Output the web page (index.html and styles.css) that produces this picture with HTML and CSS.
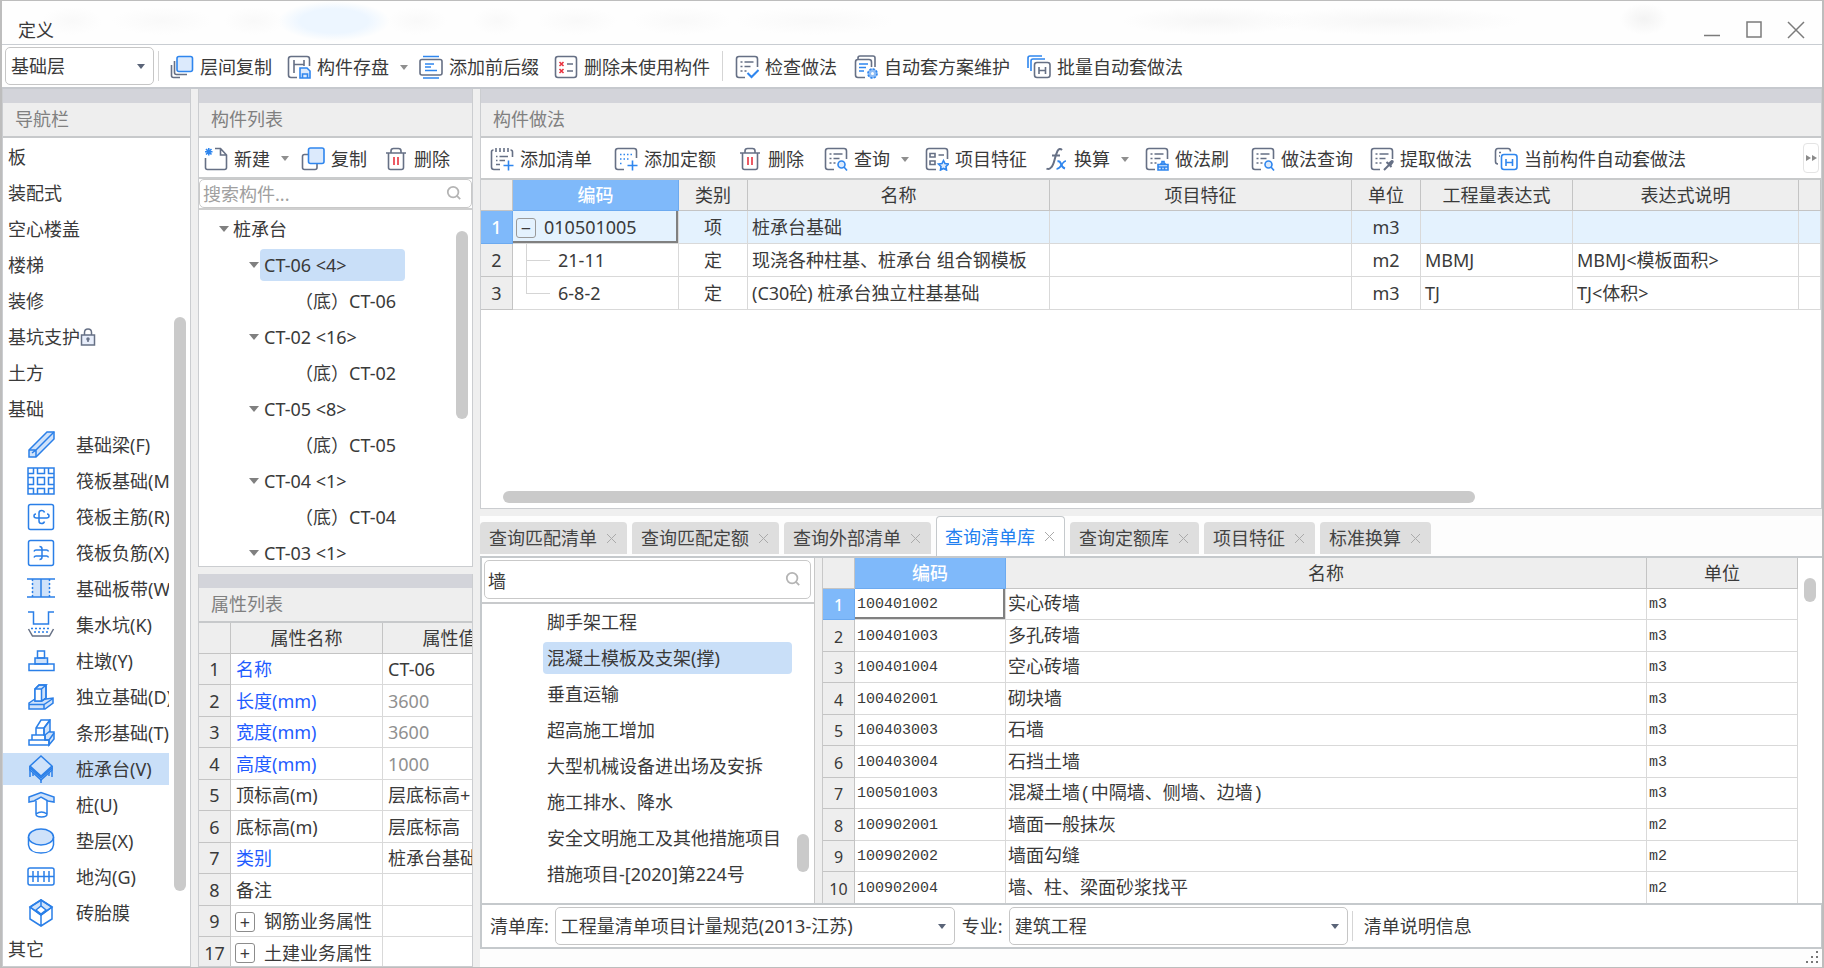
FILE: index.html
```html
<!DOCTYPE html>
<html lang="zh-CN">
<head>
<meta charset="utf-8">
<title>定义</title>
<link rel="stylesheet" href="styles.css">
</head>
<body>
<svg class="sprite" aria-hidden="true">
  <symbol id="i-layer" viewBox="0 0 24 24"><path class="d" d="M4.500 6v11.500q0 2 2 2H17M1.500 10v10.500q0 2 2 2H10"/><rect class="b l" x="7" y="1.500" width="15.500" height="15" rx="2"/></symbol>
  <symbol id="i-store" viewBox="0 0 24 24"><path class="d" d="M10 22.500H4q-2.500 0-2.500-2.500V4q0-2.500 2.500-2.500h16q2.500 0 2.500 2.500v7M7 5v13M17 5v6M7 9.500h10"/><path class="b l" d="M13 13h7l3 3v7H13z"/><path class="b" d="M15.500 23v-4h5v4"/></symbol>
  <symbol id="i-affix" viewBox="0 0 24 24"><rect class="d" x="1" y="4.500" width="22" height="15.500" rx="2"/><path class="b" d="M4 1.500h16M4 23h16M6 9h9M6 12h6M6 15.500h12"/></symbol>
  <symbol id="i-unused" viewBox="0 0 24 24"><rect class="d" x="1.500" y="1.500" width="21" height="21" rx="2.500"/><path class="r" d="m5.500 7 4 4m0-4-4 4m0 3 4 4m0-4-4 4"/><path class="d" d="M13 9h6M13 16h6"/></symbol>
  <symbol id="i-sheet" viewBox="0 0 24 24"><path class="d" d="M10 22.500H4q-2.500 0-2.500-2.500V4q0-2.500 2.500-2.500h16q2.500 0 2.500 2.500v8M5.500 7h2m2 0h9M5.500 11.500h2m2 0h6M5.500 16h2m2 0h2"/></symbol>
  <symbol id="i-check" viewBox="0 0 24 24"><use href="#i-sheet"/><path class="b w" d="m12.500 18 4 4L23.500 15"/></symbol>
  <symbol id="i-plan" viewBox="0 0 24 24"><path class="d" d="M4 4V3q0-2 2-2h13q2 0 2 2v9M11 22.500H4q-2.500 0-2.500-2.500V7q0-2.500 2.500-2.500h11q2.500 0 2.500 2.500v5"/><path class="b" d="M5 9h9M5 12.500h7M5 16h5"/><circle cx="18.500" cy="18.500" r="5" fill="#8fbdf5"/><circle class="b" cx="18.500" cy="18.500" r="4.500" stroke-dasharray="2 1.500"/><circle cx="18.500" cy="18.500" r="1.500" fill="#fff"/></symbol>
  <symbol id="i-batch" viewBox="0 0 24 24"><path class="b" d="M1 13V3q0-2 2-2h12M4 16V6q0-2 2-2h12"/><rect class="d" x="7.500" y="7.500" width="15.500" height="15" rx="2.500"/><path class="d" d="M12 12v7M18.500 12v7M12 15.500h6.500"/></symbol>
  <symbol id="i-new" viewBox="0 0 24 24"><path class="d" d="M1.500 11v9.500q0 2 2 2h17q2 0 2-2V8l-6-6.500H11M16.500 2v6h6"/><path class="b" d="m2 2 5.500 5.500M7.500 2 2 7.500M4.750 1v7.500M1 4.750h7.500"/></symbol>
  <symbol id="i-copy" viewBox="0 0 24 24"><path class="d" d="M7 7.500H3.500q-2 0-2 2v11q0 2 2 2H14q2 0 2-2V17"/><rect class="b l" x="7.500" y="1" width="15.500" height="15.500" rx="2"/></symbol>
  <symbol id="i-trash" viewBox="0 0 24 24"><path class="d" d="M2 6h20M4.500 6v14.500q0 2 2 2h11q2 0 2-2V6M7 6V4q0-2.500 2.500-2.500h5Q17 1.500 17 4v2"/><path class="r" d="M10 10v8M14 10v8"/></symbol>
  <symbol id="i-addlist" viewBox="0 0 24 24"><path class="d" d="M10 22.500H4q-2.500 0-2.500-2.500V5q0-2 2-2M22.500 10V5q0-2-2-2M6 1v4M10 1v4M14 1v4M18 1v4M6 9.500h1.500M9.500 9.500H18M6 13.500h1.500M9.500 13.500H15M6 17.500h4"/><path class="b" d="M18.500 13.500v10M13.500 18.500h10"/></symbol>
  <symbol id="i-addquota" viewBox="0 0 24 24"><path class="d" d="M10 22.500H4q-2.500 0-2.500-2.500V4q0-2.500 2.500-2.500h16q2.500 0 2.500 2.500v7"/><path class="b" d="M6 7.500h13M6 12h9M6 16.500h3" stroke-dasharray="1.500 2"/><path class="b" d="M18.500 13.500v10M13.500 18.500h10"/></symbol>
  <symbol id="i-query" viewBox="0 0 24 24"><use href="#i-sheet"/><circle class="b l" cx="17.500" cy="17.500" r="3.500"/><path class="b" d="m20 20 3 3.500"/></symbol>
  <symbol id="i-feature" viewBox="0 0 24 24"><path class="d" d="M11 22.500H4q-2.500 0-2.500-2.500V4q0-2.500 2.500-2.500h16q2.500 0 2.500 2.500v8M5 6.500h5v3.500H5zM5 14h5v3.500H5zM13.500 8H19"/><path class="b l" d="m18.500 13.500 1.500 3 3.500.5-2.500 2.500.5 3.500-3-1.500-3 1.500.5-3.500-2.500-2.500 3.500-.5z"/></symbol>
  <symbol id="i-fx" viewBox="0 0 24 24"><path class="d w" d="M18 3Q15.500.5 13.500 4Q12 7 10.500 13T7 20.500Q5 23 2.500 21.500M8 8.500h8"/><path class="b w" d="M13.500 14.500q2.500-1 3.500 2.500t4 4.500"/><path class="b" d="M22 14q-2 0-4.500 4t-5 4"/></symbol>
  <symbol id="i-brush" viewBox="0 0 24 24"><use href="#i-sheet"/><path class="b l" d="M13 23v-5.500h10V23zM15.500 17.500q.5-1.500 1.500-1.500v-1.500h2V16q1 0 1.500 1.500M13 20h10M16.500 20v3M19.500 20v3"/></symbol>
  <symbol id="i-extract" viewBox="0 0 24 24"><use href="#i-sheet"/><path class="d w" d="m14 23 6-6M16.500 15l5 5"/><path d="m18 16 3.500-3q3 0 2 2.500L21 19z" fill="#667085"/></symbol>
  <symbol id="i-auto" viewBox="0 0 24 24"><path class="d" d="M4 17q-2.500 0-2.500-2.500v-10Q1.500 1.500 4 1.500h10q2.500 0 2.500 3M5 5.500h2M5 9h1"/><rect class="b" x="7.500" y="7.500" width="15.500" height="15" rx="2.500"/><path class="b" d="M12 12v7M18.500 12v7M12 15.500h6.500"/></symbol>
  <symbol id="i-search" viewBox="0 0 18 18"><circle cx="8" cy="8" r="6" fill="none" stroke="#b4b4b4" stroke-width="2"/><path d="m12 12 4 4" stroke="#b4b4b4" stroke-width="2"/></symbol>
</svg>

<header class="titlebar">
  <h1>定义</h1>
  <div class="winbtns">
    <button aria-label="最小化"><svg viewBox="0 0 20 20"><path d="M2 15.500h16"/></svg></button>
    <button aria-label="最大化"><svg viewBox="0 0 20 20"><rect x="3" y="2" width="14" height="15"/></svg></button>
    <button aria-label="关闭"><svg viewBox="0 0 20 20"><path d="m2 2 16 16M18 2 2 18"/></svg></button>
  </div>
</header>

<div class="toolbar main-tools">
  <span class="combo floor"><select aria-label="楼层"><option>基础层</option></select></span>
  <i class="sep"></i>
  <button class="tool"><svg><use href="#i-layer"/></svg>层间复制</button>
  <button class="tool"><svg><use href="#i-store"/></svg>构件存盘<i class="caret"></i></button>
  <button class="tool"><svg><use href="#i-affix"/></svg>添加前后缀</button>
  <button class="tool"><svg><use href="#i-unused"/></svg>删除未使用构件</button>
  <i class="sep"></i>
  <button class="tool"><svg><use href="#i-check"/></svg>检查做法</button>
  <button class="tool far"><svg><use href="#i-plan"/></svg>自动套方案维护</button>
  <button class="tool far"><svg><use href="#i-batch"/></svg>批量自动套做法</button>
</div>

<main class="workspace">
  <nav class="panel nav">
    <h2>导航栏</h2>
    <ul class="nav-list">
      <li><button>板</button></li>
      <li><button>装配式</button></li>
      <li><button>空心楼盖</button></li>
      <li><button>楼梯</button></li>
      <li><button>装修</button></li>
      <li><button>基坑支护<svg class="lock" viewBox="0 0 16 18"><rect x="1.500" y="7" width="13" height="10" fill="#e8eefb"/><path d="M4.500 7V4.500q0-3.500 3.500-3.500t3.500 3.500V7M8 11.500V14"/><circle cx="8" cy="11" r="1"/></svg></button></li>
      <li><button>土方</button></li>
      <li><button>基础</button></li>
      <li class="sub"><button><svg viewBox="0 0 28 28"><path class="f" d="M2 19 20 1h7v7L9 26H2z"/><path class="n" d="M2 19h7v7M9 19 27 1M5 22l4-3"/></svg>基础梁(F)</button></li>
      <li class="sub"><button><svg viewBox="0 0 28 28"><path class="n" d="M1 1h26v26H1zM1 6.500h5.500V1M1 10.500h5.500v7H1M1 21.500h5.500V27M10.500 1v5.500h7V1M10.500 10.500h7v7h-7zM10.500 27v-5.500h7V27M21.500 1v5.500H27M27 10.500h-5.500v7H27M27 21.500h-5.500V27"/></svg>筏板基础(M)</button></li>
      <li class="sub"><button><svg viewBox="0 0 28 28"><rect class="n" x="1.500" y="1.500" width="25" height="25" rx="2"/><path class="n" d="M17.500 9.500Q17 7.500 14.500 7.500T12 10v8q0 2.500 2.500 2.500t3-2M9 11q-2 0-2 2t2.500 2h10q2.500 0 2.500-2t-2-2"/></svg>筏板主筋(R)</button></li>
      <li class="sub"><button><svg viewBox="0 0 28 28"><rect class="n" x="1.500" y="1.500" width="25" height="25" rx="2"/><path class="n" d="M7 12.500q.5-1.500 2-1.500h10.500q1.500 0 2 1.500M7 18.500q.5-1.500 2-1.500h10.500q1.500 0 2 1.500M12.500 7.500q2.500 0 2.500 2.500v8q0 2.500-2.500 2.500"/></svg>筏板负筋(X)</button></li>
      <li class="sub"><button><svg viewBox="0 0 28 28"><path d="M5 4h18v18H5z" fill="#cfe2fa"/><path class="n" d="M0 4h28M0 22h28M14 4v18"/><path class="n" d="M5.500 4v18M22.500 4v18" stroke-dasharray="2 2"/></svg>基础板带(W)</button></li>
      <li class="sub"><button><svg viewBox="0 0 28 28"><path class="n" d="M1 1h5.500v12h15V1H27"/><path class="n" d="M4 17.500h20M7 21h14" stroke-dasharray="2 2"/><path class="k" d="m1.500 18 4 7h17l4-7"/></svg>集水坑(K)</button></li>
      <li class="sub"><button><svg viewBox="0 0 28 28"><path class="f" d="M8 11h12.500v6H8z"/><path class="n" d="M10.500 4h7v7h-7zM2 17h25v6.500H2z"/></svg>柱墩(Y)</button></li>
      <li class="sub"><button><svg viewBox="0 0 28 28"><path class="f" d="m2 20 6-4h11l7-1v5l-8 6H2z"/><path class="n" d="M2 21.500h15l9-6M17 21.500V26"/><path class="f" d="M8 18V6l4-4h7v13l-4 3z"/><path d="M8 6h6.500v12H8z" fill="#fff"/><path class="n" d="M8 18V6h6.500v12zM8 6l4-4h7l-4.500 4M14.500 18l4.500-3V2"/></svg>独立基础(D)</button></li>
      <li class="sub"><button><svg viewBox="0 0 28 28"><path class="f" d="m17 9 6-8v12h4v7l-5 6v-5h-4v-5h-1z"/><path class="n" d="M2 21h20v5H2zM5 16h13v5H5zM9 16V9l5-8h9M9 9h8v7M17 9l6-8M18 16l5-4M22 21l5-7"/></svg>条形基础(T)</button></li>
      <li class="sub current"><button><svg viewBox="0 0 28 28"><path class="n" d="M3 11v11M25 11v11M14 20v8M6 15v6M22 15v6"/><path class="f" d="m14 1 11 10v4L14 25 3 15v-4z"/><path class="n" d="m3 11 11 10 11-10M3 13l11 10 11-10"/></svg>桩承台(V)</button></li>
      <li class="sub"><button><svg viewBox="0 0 28 28"><path class="f" d="m2 6 12-4.500L27 6v5l-6-1-7-4-7 4-5 1z"/><path class="n" d="M9 10v13q0 3 5.500 3t5.500-3V10M9 23q5.500-4 11 0"/></svg>桩(U)</button></li>
      <li class="sub"><button><svg viewBox="0 0 28 28"><path class="n" d="M1.500 10v8q1 8 12.500 8t12.500-8v-8"/><ellipse class="f" cx="14" cy="10" rx="12.500" ry="8"/></svg>垫层(X)</button></li>
      <li class="sub"><button><svg viewBox="0 0 28 28"><rect class="n" x="1" y="5" width="26" height="17" rx="2"/><path class="n" d="M6 8v11M11 8v11M17 8v11M22 8v11M1 13.500h26"/></svg>地沟(G)</button></li>
      <li class="sub"><button><svg viewBox="0 0 28 28"><path class="f" d="m14 1 11 7-11 8L3 8z"/><path class="n" d="m14 1 11 7v12l-11 7-11-7V8zM3 8l11 8 11-8M14 16v11"/><path d="m14 7 5 4-5 4-5-4z" fill="#fff"/><path class="n" d="M14 1v6m-5 4 5-4 5 4-5 4z"/></svg>砖胎膜</button></li>
      <li><button>其它</button></li>
    </ul>
    <i class="bar nav-bar"></i>
  </nav>

  <div class="column list-column">
    <section class="panel">
      <h2>构件列表</h2>
      <div class="toolbar list-tools">
        <button class="tool"><svg><use href="#i-new"/></svg>新建<i class="caret"></i></button>
        <button class="tool"><svg><use href="#i-copy"/></svg>复制</button>
        <button class="tool"><svg><use href="#i-trash"/></svg>删除</button>
      </div>
      <div class="search"><input type="text" aria-label="搜索构件" placeholder="搜索构件..."><svg><use href="#i-search"/></svg></div>
      <div class="tree-box">
        <ul class="tree">
          <li class="lv1"><i class="caret"></i><span>桩承台</span></li>
          <li class="lv2 picked"><i class="caret"></i><span>CT-06 &lt;4&gt;</span></li>
          <li class="lv3"><span>（底）CT-06</span></li>
          <li class="lv2"><i class="caret"></i><span>CT-02 &lt;16&gt;</span></li>
          <li class="lv3"><span>（底）CT-02</span></li>
          <li class="lv2"><i class="caret"></i><span>CT-05 &lt;8&gt;</span></li>
          <li class="lv3"><span>（底）CT-05</span></li>
          <li class="lv2"><i class="caret"></i><span>CT-04 &lt;1&gt;</span></li>
          <li class="lv3"><span>（底）CT-04</span></li>
          <li class="lv2"><i class="caret"></i><span>CT-03 &lt;1&gt;</span></li>
        </ul>
        <i class="bar tree-bar"></i>
      </div>
    </section>

    <section class="panel">
      <h2>属性列表</h2>
      <div class="props-box">
        <table class="grid props">
          <colgroup><col class="w-num"><col class="w-pname"><col class="w-pval"></colgroup>
          <thead><tr><th></th><th>属性名称</th><th>属性值</th></tr></thead>
          <tbody>
            <tr><th>1</th><td class="link">名称</td><td>CT-06</td></tr>
            <tr><th>2</th><td class="link">长度(mm)</td><td class="dim">3600</td></tr>
            <tr><th>3</th><td class="link">宽度(mm)</td><td class="dim">3600</td></tr>
            <tr><th>4</th><td class="link">高度(mm)</td><td class="dim">1000</td></tr>
            <tr><th>5</th><td>顶标高(m)</td><td>层底标高+</td></tr>
            <tr><th>6</th><td>底标高(m)</td><td>层底标高</td></tr>
            <tr><th>7</th><td class="link">类别</td><td>桩承台基础</td></tr>
            <tr><th>8</th><td>备注</td><td></td></tr>
            <tr><th>9</th><td class="group"><button class="fold" aria-label="展开">+</button>钢筋业务属性</td><td></td></tr>
            <tr><th>17</th><td class="group"><button class="fold" aria-label="展开">+</button>土建业务属性</td><td></td></tr>
          </tbody>
        </table>
      </div>
    </section>
  </div>

  <div class="column work-column">
    <section class="panel">
      <h2>构件做法</h2>
      <div class="toolbar work-tools">
        <button class="tool"><svg><use href="#i-addlist"/></svg>添加清单</button>
        <button class="tool far"><svg><use href="#i-addquota"/></svg>添加定额</button>
        <button class="tool far"><svg><use href="#i-trash"/></svg>删除</button>
        <button class="tool near"><svg><use href="#i-query"/></svg>查询<i class="caret"></i></button>
        <button class="tool"><svg><use href="#i-feature"/></svg>项目特征</button>
        <button class="tool"><svg><use href="#i-fx"/></svg>换算<i class="caret"></i></button>
        <button class="tool"><svg><use href="#i-brush"/></svg>做法刷</button>
        <button class="tool far"><svg><use href="#i-query"/></svg>做法查询</button>
        <button class="tool"><svg><use href="#i-extract"/></svg>提取做法</button>
        <button class="tool far"><svg><use href="#i-auto"/></svg>当前构件自动套做法</button>
        <button class="more" aria-label="更多"><i></i><i></i></button>
      </div>
      <div class="method-box">
        <table class="grid method">
          <colgroup><col class="w-num"><col class="w-code"><col class="w-kind"><col class="w-name"><col class="w-name"><col class="w-kind"><col class="w-expr"><col class="w-desc"><col></colgroup>
          <thead><tr><th></th><th class="hot">编码</th><th>类别</th><th>名称</th><th>项目特征</th><th>单位</th><th>工程量表达式</th><th>表达式说明</th><th></th></tr></thead>
          <tbody>
            <tr class="active"><th class="hot">1</th><td class="cursor code parent"><button class="fold" aria-label="折叠">−</button>010501005</td><td class="mid">项</td><td>桩承台基础</td><td></td><td class="mid">m3</td><td></td><td></td><td></td></tr>
            <tr><th>2</th><td class="code child">21-11</td><td class="mid">定</td><td>现浇各种柱基、桩承台 组合钢模板</td><td></td><td class="mid">m2</td><td>MBMJ</td><td>MBMJ&lt;模板面积&gt;</td><td></td></tr>
            <tr><th>3</th><td class="code child last">6-8-2</td><td class="mid">定</td><td>(C30砼) 桩承台独立柱基基础</td><td></td><td class="mid">m3</td><td>TJ</td><td>TJ&lt;体积&gt;</td><td></td></tr>
          </tbody>
        </table>
        <i class="bar method-bar"></i>
      </div>
    </section>

    <section class="lookup">
      <div class="tabs" role="tablist">
        <button role="tab">查询匹配清单<i class="x"></i></button>
        <button role="tab">查询匹配定额<i class="x"></i></button>
        <button role="tab">查询外部清单<i class="x"></i></button>
        <button role="tab" aria-selected="true" class="on">查询清单库<i class="x"></i></button>
        <button role="tab">查询定额库<i class="x"></i></button>
        <button role="tab">项目特征<i class="x"></i></button>
        <button role="tab">标准换算<i class="x"></i></button>
      </div>
      <div class="lookup-body">
        <div class="chapters">
          <div class="search tall"><input type="text" aria-label="查询" value="墙"><svg><use href="#i-search"/></svg></div>
          <div class="chapter-box">
            <ul class="tree chapter-tree">
              <li><span>脚手架工程</span></li>
              <li class="picked"><span>混凝土模板及支架(撑)</span></li>
              <li><span>垂直运输</span></li>
              <li><span>超高施工增加</span></li>
              <li><span>大型机械设备进出场及安拆</span></li>
              <li><span>施工排水、降水</span></li>
              <li><span>安全文明施工及其他措施项目</span></li>
              <li><span>措施项目-[2020]第224号</span></li>
            </ul>
            <i class="bar chapter-bar"></i>
          </div>
        </div>
        <div class="library-box">
          <table class="grid library">
            <colgroup><col class="w-num"><col class="w-lcode"><col><col class="w-lunit"></colgroup>
            <thead><tr><th></th><th class="hot">编码</th><th>名称</th><th>单位</th></tr></thead>
            <tbody>
              <tr><th class="hot">1</th><td class="cursor mono">100401002</td><td>实心砖墙</td><td class="mono">m3</td></tr>
              <tr><th>2</th><td class="mono">100401003</td><td>多孔砖墙</td><td class="mono">m3</td></tr>
              <tr><th>3</th><td class="mono">100401004</td><td>空心砖墙</td><td class="mono">m3</td></tr>
              <tr><th>4</th><td class="mono">100402001</td><td>砌块墙</td><td class="mono">m3</td></tr>
              <tr><th>5</th><td class="mono">100403003</td><td>石墙</td><td class="mono">m3</td></tr>
              <tr><th>6</th><td class="mono">100403004</td><td>石挡土墙</td><td class="mono">m3</td></tr>
              <tr><th>7</th><td class="mono">100501003</td><td>混凝土墙(中隔墙、侧墙、边墙)</td><td class="mono">m3</td></tr>
              <tr><th>8</th><td class="mono">100902001</td><td>墙面一般抹灰</td><td class="mono">m2</td></tr>
              <tr><th>9</th><td class="mono">100902002</td><td>墙面勾缝</td><td class="mono">m2</td></tr>
              <tr><th>10</th><td class="mono">100902004</td><td>墙、柱、梁面砂浆找平</td><td class="mono">m2</td></tr>
            </tbody>
          </table>
          <i class="bar library-bar"></i>
        </div>
      </div>
      <div class="filter">
        <label for="lib">清单库:</label>
        <span class="combo lib"><select id="lib"><option>工程量清单项目计量规范(2013-江苏)</option></select></span>
        <label for="major">专业:</label>
        <span class="combo major"><select id="major"><option>建筑工程</option></select></span>
        <i class="sep"></i>
        <button class="info">清单说明信息</button>
      </div>
      <footer class="status"><svg viewBox="0 0 14 14"><path d="M11 1h2v2h-2zM6 6h2v2H6zM11 6h2v2h-2zM1 11h2v2H1zM6 11h2v2H6zM11 11h2v2h-2z" fill="#777"/></svg></footer>
    </section>
  </div>
</main>
</body>
</html>
```

FILE: styles.css
```css
* { box-sizing: border-box; }
body {
  margin: 0;
  height: 100vh;
  display: flex;
  flex-direction: column;
  overflow: hidden;
  border: 1px solid #bdbdbd;
  border-width: 1px 2px;
  background: #efefef;
  color: #3a3a3a;
  font: 18px/24px "Noto Sans", "Noto Sans CJK SC", sans-serif;
}
button, input, select {
  font: inherit;
  color: inherit;
  margin: 0;
  padding: 0;
  border: 0;
  background: none;
  text-align: left;
  white-space: nowrap;
}
h1, h2, ul { margin: 0; padding: 0; font-size: 18px; font-weight: 400; list-style: none; }
i { font-style: normal; flex: none; }
svg { flex: none; }
.sprite { display: none; }

.d, .b, .r { fill: none; stroke-width: 1.6; }
.d { stroke: #667085; }
.b { stroke: #2f86ee; }
.r { stroke: #e8323f; }
.b.l { fill: #dceafc; }
.w { stroke-width: 2; }

/* Title bar */
.titlebar {
  flex: none;
  height: 44px;
  display: flex;
  align-items: flex-end;
  justify-content: space-between;
  padding: 0 16px;
  border-bottom: 1px solid #c9cdd2;
  background:
    radial-gradient(56px 20px at 332px 20px, #edf6ff 60%, transparent) no-repeat,
    radial-gradient(30px 14px at 70px 20px, #f9f9f9, transparent) no-repeat,
    radial-gradient(50px 14px at 160px 20px, #f9f9f9, transparent) no-repeat,
    radial-gradient(30px 14px at 252px 20px, #f9f9f9, transparent) no-repeat,
    radial-gradient(30px 14px at 415px 20px, #f9f9f9, transparent) no-repeat,
    radial-gradient(24px 14px at 495px 20px, #f9f9f9, transparent) no-repeat,
    radial-gradient(40px 14px at 575px 20px, #f9f9f9, transparent) no-repeat,
    radial-gradient(50px 14px at 680px 20px, #f9f9f9, transparent) no-repeat,
    radial-gradient(80px 14px at 812px 20px, #f9f9f9, transparent) no-repeat,
    radial-gradient(90px 14px at 1210px 20px, #f6f6f6, transparent) no-repeat,
    radial-gradient(130px 14px at 1390px 20px, #f6f6f6, transparent) no-repeat,
    radial-gradient(24px 16px at 1642px 18px, #f3f3f3, transparent) no-repeat,
    #fefefe;
}
.titlebar h1 { line-height: 28px; }
.winbtns { display: flex; gap: 22px; padding-bottom: 4px; }
.winbtns button { width: 20px; height: 20px; }
.winbtns svg { display: block; width: 20px; height: 20px; fill: none; stroke: #7b7b7b; stroke-width: 1.5; }

/* Toolbars */
.toolbar { flex: none; display: flex; align-items: center; background: #fff; }
.tool { display: flex; align-items: center; gap: 6px; flex: none; padding-top: 2px; }
.tool svg { width: 24px; height: 24px; }
.caret {
  width: 0;
  border: 4px solid transparent;
  border-top: 5px solid #8f8f8f;
  border-bottom: 0;
}
.tool .caret { margin-left: 5px; }
.sep { width: 1px; height: 30px; background: #d5d5d5; }
.main-tools { height: 44px; gap: 15px; padding-left: 3px; border-bottom: 2px solid #c6c9ce; }
.main-tools .sep { margin: 0 -3px; }
.main-tools .floor + .sep { margin: 0 -4px 0 -11px; }
.main-tools .caret { margin-right: -4px; }
.main-tools .far { margin-left: 2px; }
.list-tools { height: 41px; gap: 17px; padding-left: 5px; border-bottom: 2px solid #cacccd; }
.list-tools .caret { margin-right: -5px; }
.work-tools { height: 42px; gap: 17px; padding: 0 2px 0 9px; border-bottom: 2px solid #c8cacb; }
.work-tools .far { margin-left: 5px; }
.work-tools .near { margin-left: 3px; }
.work-tools .caret { margin-right: -1px; }
.more {
  display: flex;
  align-items: center;
  justify-content: center;
  gap: 1px;
  width: 16px;
  height: 30px;
  margin-left: auto;
  border: 1px solid #e4e4e4;
  border-radius: 4px;
}
.more i { border: 3px solid transparent; border-left: 5px solid #8a8a8a; border-right: 0; }

.combo { position: relative; display: block; height: 38px; }
.combo select {
  appearance: none;
  display: block;
  width: 100%;
  height: 100%;
  padding: 0 24px 0 5px;
  border: 1px solid #c6c6c6;
  border-radius: 5px;
  background: #fff;
}
.combo::after {
  content: "";
  position: absolute;
  right: 9px;
  top: 17px;
  border: 4px solid transparent;
  border-top: 5px solid #5a6478;
  border-bottom: 0;
}
.floor { width: 149px; }

/* Docked panels */
.workspace {
  flex: 1;
  min-height: 0;
  display: grid;
  grid-template-columns: 189px 275px minmax(0, 1fr);
  gap: 7px;
}
.column { display: grid; gap: 7px; min-height: 0; min-width: 0; }
.list-column { grid-template-rows: minmax(0, 478fr) minmax(0, 393fr); }
.work-column { grid-template-rows: minmax(0, 420fr) minmax(0, 451fr); }
.panel {
  position: relative;
  display: flex;
  flex-direction: column;
  min-height: 0;
  min-width: 0;
  overflow: hidden;
  background: #fff;
  border: 1px solid #cbcdd0;
  border-top: 0;
}
.panel h2 {
  flex: none;
  border-top: 14px solid #d3d4da;
  border-bottom: 2px solid #c7c9cb;
  padding: 4px 12px 5px;
  background: #eee;
  color: #808080;
}
.bar { position: absolute; border-radius: 6px; background: #cacaca; }

/* Navigation */
.nav-list { width: 166px; overflow: hidden; padding-top: 1px; }
.nav-list li { height: 36px; padding: 2px 0; }
.nav-list button {
  display: flex;
  align-items: center;
  width: 100%;
  height: 32px;
  padding-left: 5px;
}
.nav-list .sub button { gap: 21px; padding-left: 24px; }
.nav-list .sub svg { width: 28px; height: 28px; }
.nav-list .current { background: #c9dff8 content-box; }
.nav-list .n, .nav-list .f { fill: none; stroke: #2a7fe8; stroke-width: 1.5; }
.nav-list .f { fill: #cfe2fa; }
.nav-list .k { fill: none; stroke: #667085; stroke-width: 1.5; }
.lock { width: 16px; height: 18px; fill: none; stroke: #667085; stroke-width: 1.5; }
.nav-bar { right: 4px; top: 228px; width: 12px; height: 574px; }

/* Component list */
.search { position: relative; flex: none; height: 29px; }
.search input {
  width: 100%;
  height: 100%;
  padding: 0 36px 0 3px;
  border: 1px solid #c9c9c9;
  border-radius: 5px;
  background: #fff;
}
.search input::placeholder { color: #a0a0a0; opacity: 1; }
.search svg { position: absolute; right: 10px; top: 6px; width: 16px; height: 16px; }
.tree-box { position: relative; flex: 1; min-height: 0; overflow: hidden; border-top: 2px solid #cfcfcf; padding-top: 1px; }
.tree li { display: flex; align-items: center; height: 36px; white-space: nowrap; }
.tree .caret { border-width: 6px 5px 0; border-top-color: #808080; }
.tree span { height: 32px; line-height: 32px; padding: 0 4px; border-radius: 4px; }
.picked span { background: #c9dff8; }
.lv1 { padding-left: 20px; }
.lv2 { padding-left: 50px; }
.lv2 .caret { margin-right: 1px; }
.lv3 { padding-left: 92px; }
.tree-box .picked span { width: 145px; }
.tree-bar { right: 4px; top: 21px; width: 12px; height: 188px; }

/* Grids */
.grid { border-collapse: separate; border-spacing: 0; table-layout: fixed; }
.grid th, .grid td {
  padding: 0 4px;
  border: 0 solid #d9d9d9;
  border-width: 0 1px 1px 0;
  white-space: nowrap;
  overflow: hidden;
  text-align: left;
  font-weight: 400;
}
.grid th { padding: 0; text-align: center; background: #eee; border-color: #c4c4c4; }
.grid th.hot { background: #7fb9fa; border-color: #6caaf0; color: #fff; font-weight: 500; }
.grid thead th { height: 31px; }
.grid .mid { text-align: center; }
.grid .cursor { box-shadow: inset -2px -2px #808080; }
.w-num { width: 32px; }
.fold {
  display: inline-block;
  width: 20px;
  height: 20px;
  border: 1px solid #8c8c8c;
  border-radius: 3px;
  line-height: 16px;
  text-align: center;
  vertical-align: middle;
}

.props-box { flex: 1; min-height: 0; overflow: hidden; }
.props { width: 318px; }
.w-pname { width: 152px; }
.w-pval { width: 134px; }
.props td, .props tbody th { height: 31px; }
.props td { padding-left: 5px; }
.props tbody tr:nth-child(even) > * { height: 32px; }
.props .link { color: #1f5cff; }
.props .dim { color: #909090; }
.props td.group { padding-left: 4px; }
.props .fold { margin: -3px 9px 0 0; }

.method-box { position: relative; flex: 1; min-height: 0; overflow: hidden; }
.method { width: 100%; }
.method tbody > tr > * { height: 33px; }
.method .active td { background: #e4f2fe; }
.w-code { width: 166px; }
.w-kind { width: 69px; }
.w-name { width: 302px; }
.w-expr { width: 152px; }
.w-desc { width: 226px; }
.method .code { padding-left: 3px; }
.method .fold { margin: -3px 8px 0 0; border-color: #9a9a9a; }
.method .child {
  padding-left: 45px;
  background:
    linear-gradient(#d5d5d5, #d5d5d5) 13px 16px / 24px 1px no-repeat,
    linear-gradient(#d5d5d5, #d5d5d5) 13px 0 / 1px 100% no-repeat;
}
.method .last {
  background:
    linear-gradient(#d5d5d5, #d5d5d5) 13px 16px / 24px 1px no-repeat,
    linear-gradient(#d5d5d5, #d5d5d5) 13px 0 / 1px 17px no-repeat;
}
.method-bar { left: 22px; bottom: 5px; width: 972px; height: 12px; }

/* Lookup area */
.lookup { display: flex; flex-direction: column; min-height: 0; min-width: 0; background: #fdfdfd; }
.tabs { flex: none; display: flex; align-items: flex-end; gap: 5px; height: 42px; border-bottom: 2px solid #c5c9cc; }
.tabs button {
  display: flex;
  align-items: center;
  gap: 10px;
  height: 32px;
  margin-bottom: 2px;
  padding: 0 11px 0 9px;
  border-radius: 4px 4px 0 0;
  background: #dedede;
  color: #444;
}
.tabs .on {
  height: 40px;
  margin-bottom: 0;
  padding: 0 10px 0 8px;
  border: 1px solid #c5c9cc;
  border-bottom: 0;
  background: #fff;
  color: #2080f0;
}
.x {
  width: 9px;
  height: 9px;
  background:
    linear-gradient(45deg, transparent 45%, #aaa 45% 55%, transparent 55%),
    linear-gradient(-45deg, transparent 45%, #aaa 45% 55%, transparent 55%);
}
.lookup-body {
  flex: 1;
  min-height: 0;
  display: grid;
  grid-template-columns: 333px minmax(0, 1fr);
  gap: 7px;
  background: #efefef;
  border-left: 2px solid #c5c9cc;
}
.chapters { display: flex; flex-direction: column; min-height: 0; background: #fff; border-right: 1px solid #c8c8c8; }
.search.tall { height: 39px; margin: 2px 3px 3px 2px; }
.search.tall svg { top: 11px; }
.chapter-box { position: relative; flex: 1; min-height: 0; overflow: hidden; border-top: 2px solid #c8cacc; }
.chapter-tree li { padding-left: 61px; }
.chapter-tree .picked span { width: 249px; }
.chapter-bar { right: 5px; bottom: 31px; width: 12px; height: 38px; }
.library-box {
  position: relative;
  min-height: 0;
  overflow: hidden;
  padding-right: 24px;
  background: #fff;
  border-left: 1px solid #c8c8c8;
  font-family: "Liberation Mono", "Noto Sans CJK SC", monospace;
}
.library { width: 100%; }
.w-lcode { width: 151px; }
.w-lunit { width: 151px; }
.library td { height: 31px; padding: 2px 2px 0; }
.library tr:nth-child(even) td { height: 32px; }
.library .mono { font-size: 15px; }
.library th { font-family: "Noto Sans", "Noto Sans CJK SC", sans-serif; }
.library tbody th { font-size: 16px; padding-top: 2px; }
.library-bar { right: 6px; top: 20px; width: 12px; height: 24px; }

.filter {
  flex: none;
  display: flex;
  align-items: center;
  height: 46px;
  padding-left: 8px;
  border: 2px solid #c5c9cc;
  border-right-width: 1px;
  background: #fff;
}
.filter label { margin-right: 6px; }
.lib { width: 400px; margin-right: 7px; }
.major { width: 339px; margin-right: 4px; }
.filter .info { margin-left: 11px; }
.status { flex: none; display: flex; justify-content: flex-end; height: 18px; padding: 1px 3px 0 0; }
.status svg { width: 14px; height: 14px; }
```
